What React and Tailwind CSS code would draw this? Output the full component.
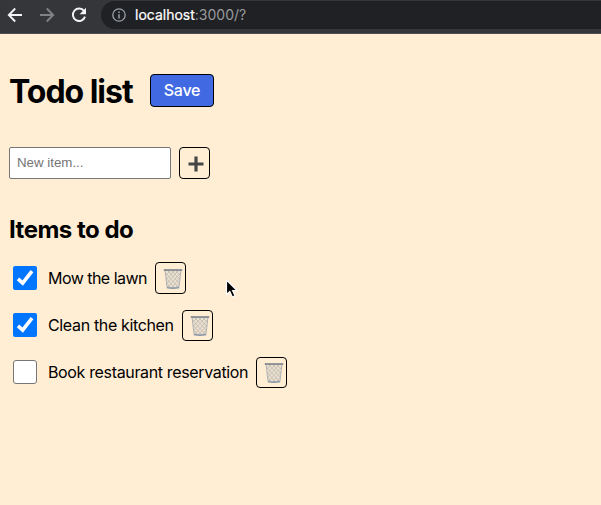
import React, { useState } from "react";

const ITEMS = [
  { text: "Mow the lawn", done: true, label: "w-[107px] tracking-[-0.53px]", button: "h-8" },
  { text: "Clean the kitchen", done: true, label: "w-[134px] tracking-[-0.35px]", button: "mt-px h-[31px]" },
  { text: "Book restaurant reservation", done: false, label: "w-[208px] tracking-[-0.35px]", button: "mt-px h-[31px]" },
];

function BrowserBar() {
  return (
    <header className="flex h-[34px] items-start border-b border-[#4b4c50] bg-[#35363a]">
      <div className="flex w-[101px] shrink-0 gap-4 pt-[7px] pl-[7px]">
        <svg width="16" height="16" viewBox="0 0 16 16" fill="none" stroke="#f1f3f4" strokeWidth="1.9">
          <path d="M15 8H2M8.2 1.5 1.8 8l6.4 6.5" />
        </svg>
        <svg width="16" height="16" viewBox="0 0 16 16" fill="none" stroke="#818286" strokeWidth="1.9">
          <path d="M1 8h13M7.800 1.500 14.200 8l-6.400 6.500" />
        </svg>
        <svg width="16" height="16" viewBox="0 0 16 16" fill="none">
          <path d="M13.100 4.100A6.200 6.200 0 1 0 14 9.600" stroke="#f1f3f4" strokeWidth="1.9" />
          <path d="M15 .8v6.400H8.600z" fill="#f1f3f4" />
        </svg>
      </div>
      <div className="mt-px flex h-7 flex-1 items-center rounded-l-full bg-[#202124] pl-[11px]">
        <svg width="14" height="14" viewBox="0 0 14 14" fill="none" stroke="#9aa0a6" strokeWidth="1.300">
          <circle cx="7" cy="7" r="6.200" />
          <path d="M7 6.200v4.200M7 3.500v1.500" strokeWidth="1.500" />
        </svg>
        <span className="ml-[9px] text-[14px] leading-7 text-[#9a9b9e]">
          <span className="text-white [-webkit-text-stroke:0.2px_white]">localhost</span>:3000/?
        </span>
      </div>
    </header>
  );
}

function CheckBox({ checked, onChange }) {
  return (
    <label className="ml-1 flex h-6 w-6 shrink-0">
      <input type="checkbox" className="sr-only" checked={checked} onChange={onChange} />
      {checked ? (
        <span className="flex h-6 w-6 rounded-[2px] bg-[#0075ff]">
          <svg width="24" height="24" viewBox="0 0 24 24" fill="none" stroke="white" strokeWidth="3.600">
            <path d="m5 12.900 4.700 4.300L19 5.200" />
          </svg>
        </span>
      ) : (
        <span className="h-6 w-6 rounded-[3px] border border-[#767676] bg-white" />
      )}
    </label>
  );
}

function TrashIcon() {
  return (
    <svg width="20" height="22" viewBox="0 0 20 22" fill="none">
      <path d="m2 2 2 17q6 2 12 0l2-17z" fill="#ece1d0" />
      <path
        d="m2.500 5 12.500 14M3 10l8 9.500M3.500 15l4 4.500M5 3l11 12M9 3l7.500 8M13 3l4 4M17.500 5 5 19M17 10l-8 9.500M16.500 15l-4 4.500M15 3 4 15M11 3l-7.500 8M7 3 3 7"
        stroke="#b9b5ac"
        strokeWidth=".7"
      />
      <path d="m2 2 2 17M18 2l-2 17" stroke="#a9adb2" strokeWidth=".9" />
      <path d="M.8 2h18.400" stroke="#717985" strokeWidth="1.500" />
      <path d="M3.800 19.500q6.200 1.200 12.400 0" stroke="#8b98aa" strokeWidth="1.700" />
    </svg>
  );
}

function TodoRow({ item }) {
  const [done, setDone] = useState(item.done);
  return (
    <li className="flex h-[47px] items-start">
      <div className="flex h-8 items-center">
        <CheckBox checked={done} onChange={() => setDone(!done)} />
        <span className={"ml-[11px] shrink-0 text-[16px] leading-8 whitespace-nowrap " + item.label}>{item.text}</span>
        <button className={"flex w-[31px] items-center justify-center rounded-[4px] border border-black pt-px pl-[5px] " + item.button}>
          <TrashIcon />
        </button>
      </div>
    </li>
  );
}

export default function App() {
  return (
    <div className="h-[505px] w-[601px] overflow-hidden bg-[#ffedd4] font-['Inter',sans-serif] text-black">
      <BrowserBar />
      <main className="relative px-[9px] pt-10">
        <div className="flex h-[33px] items-center">
          <h1 className="w-[141px] pt-px text-[32px] leading-[33px] font-bold tracking-[-1.03px] whitespace-nowrap">Todo list</h1>
          <button className="h-[33px] w-16 rounded-[4px] border border-black bg-[#4169e1] pb-px text-[16px] font-medium tracking-[-0.25px] text-white">
            Save
          </button>
        </div>
        <div className="mt-10 flex h-8 gap-2">
          <input
            placeholder="New item..."
            className="h-8 w-[162px] rounded-[2px] border border-[#767676] bg-white px-[7px] pb-[2px] font-['Liberation_Sans',sans-serif] text-[13.3px] outline-none placeholder:text-[#757575]"
          />
          <button className="flex h-8 w-[31px] items-center justify-center rounded-[4px] border border-black pt-px pl-[3px]">
            <svg width="16" height="16" viewBox="0 0 16 16" stroke="#444648" strokeWidth="3.200">
              <path d="M8 .5v15M.5 8h15" />
            </svg>
          </button>
        </div>
        <h2 className="mt-[35px] h-8 text-[24px] leading-8 font-bold tracking-[-0.5px]">Items to do</h2>
        <ul className="mt-4">
          {ITEMS.map((item) => (
            <TodoRow key={item.text} item={item} />
          ))}
        </ul>
        <svg className="absolute top-[244px] left-[224px]" width="15" height="22" viewBox="0 0 15 22">
          <path d="M2.500 2v14.500l3.300-3 2.500 5.500 2.700-1.200-2.400-5.300h4.400z" fill="black" stroke="white" strokeWidth="1.200" />
        </svg>
      </main>
    </div>
  );
}
